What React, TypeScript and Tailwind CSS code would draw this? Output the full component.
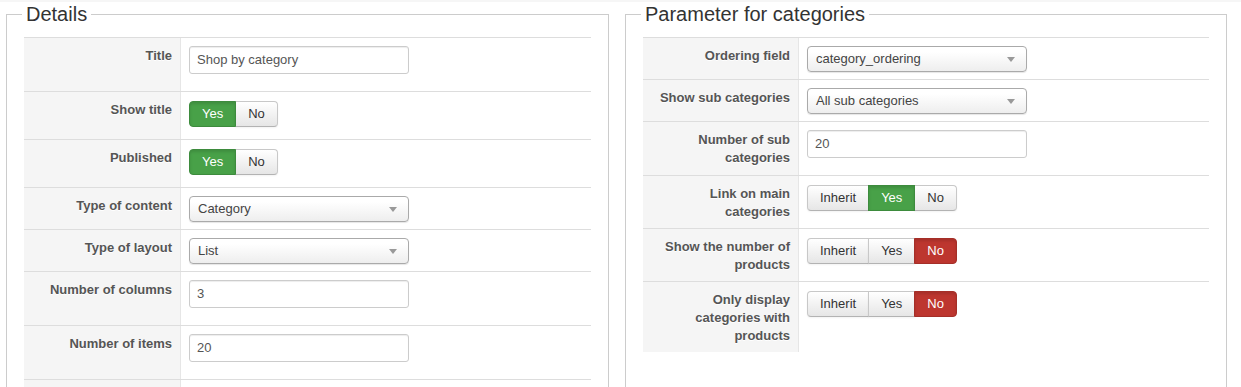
import clsx from "clsx";

type Field =
  | { label: string; kind: "input"; value: string }
  | { label: string; kind: "select"; value: string }
  | { label: string; kind: "toggle"; options: string[]; active: number; tone: "green" | "red" }
  | { label: string; kind: "empty" };

const details: Field[] = [
  { label: "Title", kind: "input", value: "Shop by category" },
  { label: "Show title", kind: "toggle", options: ["Yes", "No"], active: 0, tone: "green" },
  { label: "Published", kind: "toggle", options: ["Yes", "No"], active: 0, tone: "green" },
  { label: "Type of content", kind: "select", value: "Category" },
  { label: "Type of layout", kind: "select", value: "List" },
  { label: "Number of columns", kind: "input", value: "3" },
  { label: "Number of items", kind: "input", value: "20" },
  { label: "", kind: "empty" },
];

const params: Field[] = [
  { label: "Ordering field", kind: "select", value: "category_ordering" },
  { label: "Show sub categories", kind: "select", value: "All sub categories" },
  { label: "Number of sub categories", kind: "input", value: "20" },
  { label: "Link on main categories", kind: "toggle", options: ["Inherit", "Yes", "No"], active: 1, tone: "green" },
  { label: "Show the number of products", kind: "toggle", options: ["Inherit", "Yes", "No"], active: 2, tone: "red" },
  { label: "Only display categories with products", kind: "toggle", options: ["Inherit", "Yes", "No"], active: 2, tone: "red" },
];

function TextInput({ value }: { value: string }) {
  return (
    <div className="mb-[10px] h-[28px] w-[220px] rounded-[3px] border border-[#ccc] bg-white px-[7px] text-[13px] leading-[26px] text-[#555] shadow-[inset_0_1px_1px_rgba(0,0,0,0.075)]">
      {value}
    </div>
  );
}

function Select({ value }: { value: string }) {
  return (
    <div className="flex h-[26px] w-[220px] items-center justify-between rounded-[4px] border border-[#aaa] bg-linear-to-b from-white from-20% to-[#eee] pl-[8px] pr-[11px] text-[13px] text-[#444] shadow-[0_1px_1px_rgba(0,0,0,0.1)]">
      <span>{value}</span>
      <svg width="8" height="5" viewBox="0 0 8 5">
        <path d="M0 0h8L4 5z" fill="#999" />
      </svg>
    </div>
  );
}

function Toggle({ options, active, tone }: { options: string[]; active: number; tone: "green" | "red" }) {
  return (
    <div className="mt-px mb-[5px] flex">
      {options.map((opt, i) => {
        const on = i === active;
        return (
          <span
            key={opt}
            className={clsx(
              "h-[26px] border px-[12px] text-[13px] leading-[24px]",
              i > 0 && "-ml-px",
              i === 0 && "rounded-l-[4px]",
              i === options.length - 1 && "rounded-r-[4px]",
              on && tone === "green" && "relative border-[#3d8b3d] bg-[#48a148] text-white shadow-[inset_0_2px_3px_rgba(0,0,0,0.12)]",
              on && tone === "red" && "relative border-[#a52f28] bg-[#bd362f] text-white shadow-[inset_0_2px_3px_rgba(0,0,0,0.12)]",
              !on && "border-[#c8c8c8] border-b-[#b3b3b3] bg-linear-to-b from-white to-[#e6e6e6] text-[#333] shadow-[0_1px_2px_rgba(0,0,0,0.05)]"
            )}
          >
            {opt}
          </span>
        );
      })}
    </div>
  );
}

function Row({ field, wide }: { field: Field; wide?: boolean }) {
  return (
    <div className={clsx("grid border-t border-[#ddd]", wide ? "grid-cols-[157px_1fr]" : "grid-cols-[156px_1fr]")}>
      <div className="border-r border-[#e6e6e6] bg-[#f5f5f5] pt-[9px] pb-[7px] pl-[12px] pr-[8px] text-right text-[13px] font-bold leading-[18px] text-[#555] [text-shadow:0_1px_0_#fff]">
        {field.label}
      </div>
      <div className="pt-[8px] pb-[7px] pl-[8px]">
        {field.kind === "input" && <TextInput value={field.value} />}
        {field.kind === "select" && <Select value={field.value} />}
        {field.kind === "toggle" && <Toggle options={field.options} active={field.active} tone={field.tone} />}
        {field.kind === "empty" && <div className="h-[40px]" />}
      </div>
    </div>
  );
}

function Panel({ title, fields, className, wide }: { title: string; fields: Field[]; className: string; wide?: boolean }) {
  return (
    <fieldset className={clsx("m-0 min-w-0 border border-[#ccc] px-[17px] pt-[11px] pb-0", className)}>
      <legend className="-ml-[2px] px-[4px] text-[20px] leading-[24px] text-[#333]">{title}</legend>
      <div>
        {fields.map((f, i) => (
          <Row key={i} field={f} wide={wide} />
        ))}
      </div>
    </fieldset>
  );
}

export default function App() {
  return (
    <div className="h-[387px] overflow-hidden border-t-2 border-[#f6f6f6] bg-white font-['Liberation_Sans',Arial,sans-serif]">
      <div className="flex items-stretch pl-[6px]">
        <Panel title="Details" fields={details} className="w-[603px]" wide />
        <Panel title="Parameter for categories" fields={params} className="ml-[16px] w-[602px]" />
      </div>
    </div>
  );
}
